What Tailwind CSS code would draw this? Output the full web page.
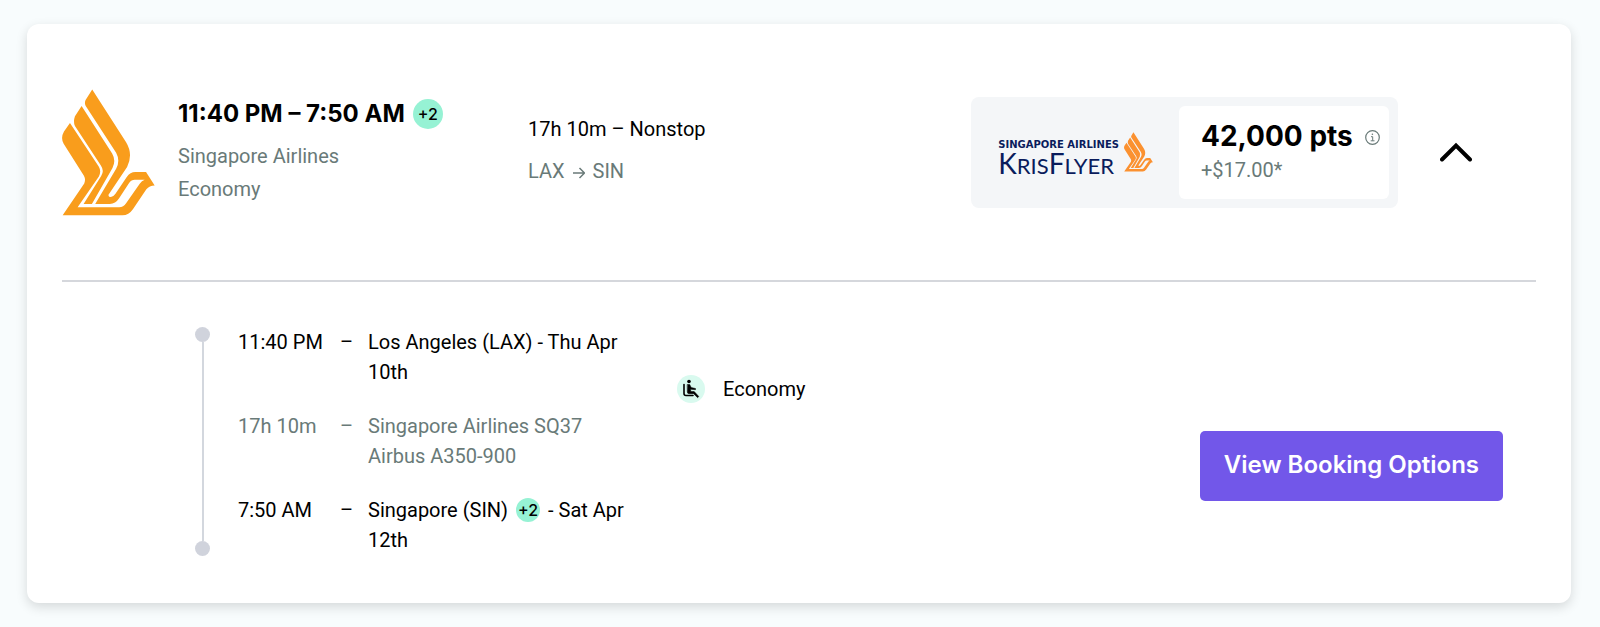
<!DOCTYPE html>
<html lang="en">

<head>
  <meta charset="UTF-8" />
  <meta name="viewport" content="width=device-width, initial-scale=1.0" />
  <title>LAX to SIN - Singapore Airlines</title>
  <script src="https://cdn.jsdelivr.net/npm/@tailwindcss/browser@4"></script>
</head>

<body class="bg-[#f8fcfd] font-['Roboto',sans-serif] text-xl text-black">
  <!-- bird logo, shared by the airline and the loyalty program -->
  <svg class="hidden">
    <symbol id="bird" viewBox="36 26 280 380">
      <path d="M127 26 L229 185 Q251 221 232 260 L176 343 Q175 350 183 350 Q191 349 197 340 L231 290 Q241 275 257 275 H289 L315 315 Q299 315 290 327 L250 386 Q237 405 218 405 H38 L103 309 Q108 297 102 286 L41 190 Q31 172 42 153 L60 127 L147 259 Q155 273 147 288 L83 381 H208 Q221 381 229 369 L270 310 Q276 301 285 298 H255 Q245 298 238 308 L208 354 Q197 371 180 371 H136 L199 265 Q212 241 199 217 L107 75 Q103 68 107 58 Z" />
      <path d="M95 76 L187 219 Q199 240 188 263 L126 371 H101 L154 287 Q164 271 153 255 L75 136 Q69 124 75 107 Z" />
    </symbol>
  </svg>

  <main class="py-6 pr-[29px] pl-[27px]">
    <article class="rounded-xl bg-white px-[35px] shadow-[0_4px_12px_rgba(0,0,0,0.14)]">
      <header class="flex h-[258px] items-center border-b-2 border-[#d5d7dc]">
        <svg class="mr-[23px] h-[127px] w-[93px] shrink-0 text-[#f99d1c]" fill="currentColor" role="img" aria-label="Singapore Airlines"><use href="#bird" /></svg>
        <div class="w-[350px]">
          <div class="mb-[10px] flex items-center gap-2">
            <h2 class="font-['Inter',sans-serif] text-2xl leading-8 font-bold">11:40 PM – 7:50 AM</h2>
            <span class="flex size-[30px] items-center justify-center rounded-full bg-[#96f2d4] font-['Inter',sans-serif] text-base font-medium">+2</span>
          </div>
          <p class="leading-[33px] text-[#697a78]">Singapore Airlines</p>
          <p class="leading-[33px] text-[#697a78]">Economy</p>
        </div>
        <div class="flex flex-col gap-3 pb-1">
          <p class="leading-[30px]">17h 10m – Nonstop</p>
          <p class="flex items-center gap-2 leading-[30px] text-[#697a78]">LAX
            <svg class="mt-1 h-3 w-3" viewBox="0 0 12 12" fill="none" stroke="currentColor" stroke-width="1.5" role="img" aria-label="to"><path d="M0 6h11M6.500 1l5 5-5 5" /></svg>
            SIN</p>
        </div>

        <div class="ml-auto flex items-center rounded-lg bg-[#f4f6f8] p-[9px]">
          <div class="flex items-center gap-[5px] pr-[26px] pl-[18px]">
            <div class="pt-3 text-[#0a1c5c]">
              <div class="font-['DejaVu_Sans',sans-serif] text-[10px] leading-3 font-bold">SINGAPORE AIRLINES</div>
              <div class="font-['Lato',sans-serif] text-[22px] leading-6"><span class="text-[28px] leading-6">K</span>RIS<span class="text-[28px] leading-6">F</span>LYER</div>
            </div>
            <svg class="h-10 w-[29px] shrink-0 text-[#fb9130]" fill="currentColor" aria-hidden="true"><use href="#bird" /></svg>
          </div>
          <div class="h-[93px] w-[210px] rounded-md bg-white pt-3 pl-[22px]">
            <div class="flex items-center gap-3">
              <strong class="font-['Inter',sans-serif] text-[28px] leading-9 font-bold">42,000 pts</strong>
              <button type="button" aria-label="Points details" class="pt-1 text-[#697a78]">
                <svg class="size-[15px]" viewBox="0 0 15 15" fill="none" stroke="currentColor"><circle cx="7.500" cy="7.500" r="6.800" stroke-width="1.200" /><path d="M6 6.700h1.700v4M5.700 10.800h3.800" /><circle cx="7.400" cy="4.300" r=".8" fill="currentColor" stroke="none" /></svg>
              </button>
            </div>
            <p class="leading-8 text-[#697a78]">+$17.00*</p>
          </div>
        </div>
        <button type="button" aria-label="Hide flight details" class="mr-16 ml-[42px]">
          <svg class="h-5 w-8" viewBox="0 0 32 20" fill="none" stroke="#000" stroke-width="4" stroke-linecap="round"><path d="M2 17.500 16 3.500 30 17.500" /></svg>
        </button>
      </header>

      <section class="flex items-start pt-[45px] pb-[47px] pl-[133px]">
        <!-- departure to arrival line -->
        <div class="flex h-[229px] w-[15px] flex-col items-center">
          <span class="size-[15px] rounded-full bg-[#d0d3dc]"></span>
          <span class="w-[2px] flex-1 bg-[#d3d7de]"></span>
          <span class="size-[15px] rounded-full bg-[#d0d3dc]"></span>
        </div>
        <ol class="ml-7 flex w-[400px] flex-col gap-6 leading-[30px]">
          <li class="flex">
            <span class="w-[102px] shrink-0">11:40 PM</span>
            <span class="w-7 shrink-0">–</span>
            <span>Los Angeles (LAX) - Thu Apr<br />10th</span>
          </li>
          <li class="flex text-[#697a78]">
            <span class="w-[102px] shrink-0">17h 10m</span>
            <span class="w-7 shrink-0">–</span>
            <span>Singapore Airlines SQ37<br />Airbus A350-900</span>
          </li>
          <li class="flex">
            <span class="w-[102px] shrink-0">7:50 AM</span>
            <span class="w-7 shrink-0">–</span>
            <div>
              <div class="flex items-center">Singapore (SIN)
                <span class="mx-2 flex size-6 items-center justify-center rounded-full bg-[#96f2d4] font-['Inter',sans-serif] text-base font-medium">+2</span>
                - Sat Apr</div>
              <div>12th</div>
            </div>
          </li>
        </ol>
        <div class="mt-12 ml-[39px] flex items-center gap-[18px] leading-7">
          <span class="flex size-7 items-center justify-center rounded-full bg-[#d9faef]">
            <svg class="size-5" viewBox="0 0 20 20" fill="none" stroke="#000" stroke-linecap="round" stroke-linejoin="round" aria-hidden="true">
              <circle cx="8" cy="2.500" r="1.800" fill="#000" stroke="none" />
              <path d="M3 5.500v9q0 2 2 2h7" stroke-width="1.600" />
              <path d="M6.500 5.500h2.200l1.500 3 4.300 1v1.200l-4.800-.4v2.200h3.500l4.600 5-1.200 1.200-4-4H8q-1.700 0-1.700-1.700z" fill="#000" stroke-width=".5" />
            </svg>
          </span>
          Economy
        </div>
        <a href="#booking" class="mt-[104px] mr-[33px] ml-auto flex h-[70px] items-center rounded-[5px] bg-[#7257e9] px-6 pb-[2px] font-['Inter',sans-serif] text-2xl font-semibold text-white">View Booking Options</a>
      </section>
    </article>
  </main>
</body>

</html>
